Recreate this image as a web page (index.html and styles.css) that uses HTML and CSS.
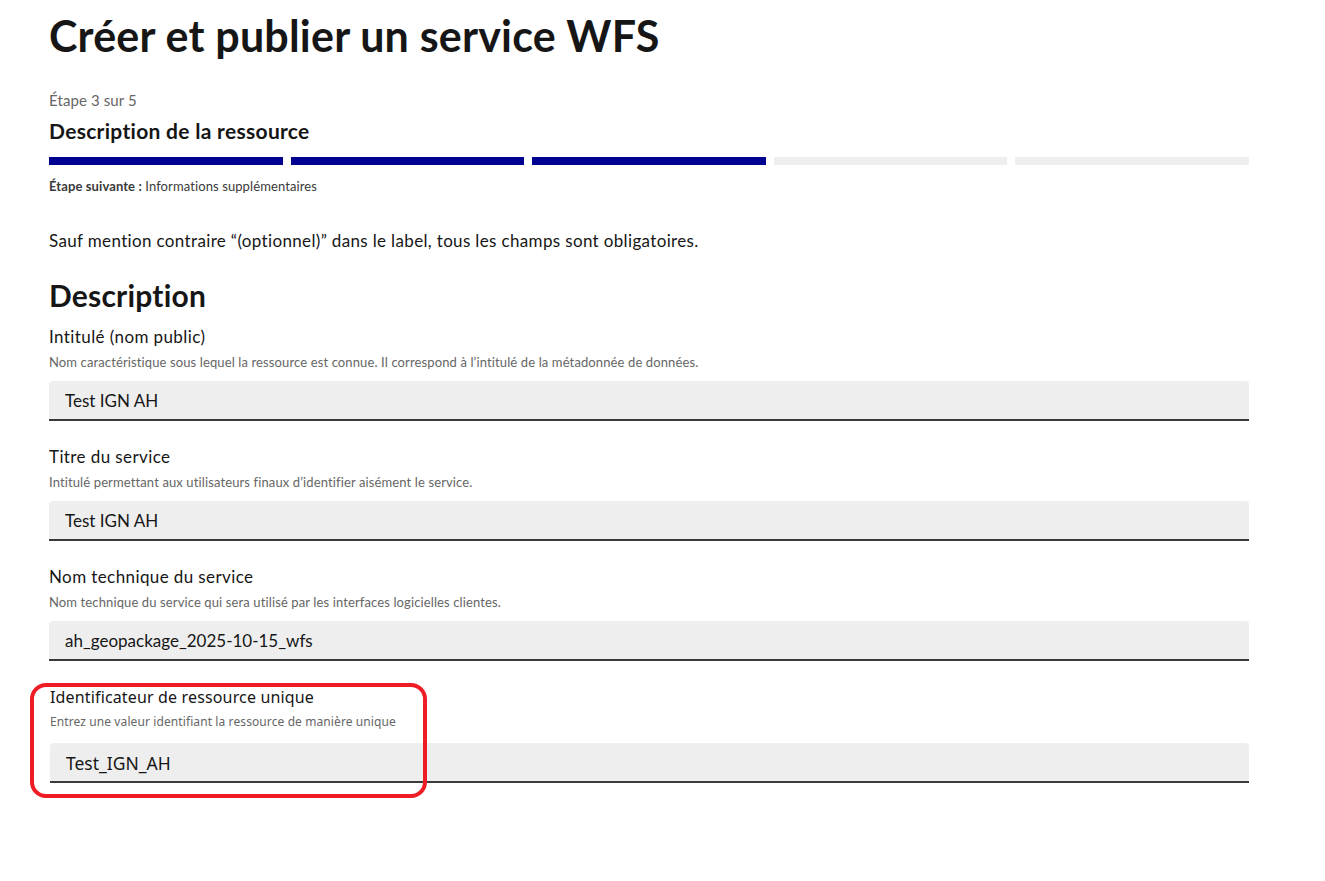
FILE: index.html
```
<!DOCTYPE html>
<html lang="fr">
<head>
<meta charset="utf-8">
<title>Créer et publier un service WFS</title>
<link rel="stylesheet" href="styles.css">
</head>
<body>
<main class="page">
  <h1 class="title">Créer et publier un service WFS</h1>
  <div class="stepper">
    <p class="stepper-state">Étape 3 sur 5</p>
    <h2 class="stepper-title">Description de la ressource</h2>
    <div class="stepper-steps">
      <span class="step done"></span>
      <span class="step done"></span>
      <span class="step done"></span>
      <span class="step"></span>
      <span class="step"></span>
    </div>
    <p class="stepper-next"><b>Étape suivante :</b> Informations supplémentaires</p>
  </div>
  <p class="intro">Sauf mention contraire “(optionnel)” dans le label, tous les champs sont obligatoires.</p>
  <h2 class="section">Description</h2>
  <div class="group">
    <label class="label">Intitulé (nom public)</label>
    <p class="hint">Nom caractéristique sous lequel la ressource est connue. Il correspond à l’intitulé de la métadonnée de données.</p>
    <div class="input">Test IGN AH</div>
  </div>
  <div class="group">
    <label class="label">Titre du service</label>
    <p class="hint">Intitulé permettant aux utilisateurs finaux d’identifier aisément le service.</p>
    <div class="input">Test IGN AH</div>
  </div>
  <div class="group">
    <label class="label">Nom technique du service</label>
    <p class="hint">Nom technique du service qui sera utilisé par les interfaces logicielles clientes.</p>
    <div class="input">ah_geopackage_2025-10-15_wfs</div>
  </div>
  <div class="group group-alt">
    <label class="label">Identificateur de ressource unique</label>
    <p class="hint">Entrez une valeur identifiant la ressource de manière unique</p>
    <div class="input">Test_IGN_AH</div>
    <span class="highlight"></span>
  </div>
</main>
</body>
</html>
```
FILE: styles.css
```
* { box-sizing: border-box; }
html, body { margin: 0; padding: 0; background: #fff; }
body {
  font-family: Lato, "Liberation Sans", sans-serif;
  color: #161616;
}
.page {
  width: 1200px;
  margin-left: 49px;
  padding-top: 12px;
  padding-bottom: 80px;
}
.title {
  margin: 0;
  font-size: 43px;
  line-height: 48px;
  font-weight: 700;
  letter-spacing: 0.2px;
}
.stepper { margin-top: 28px; }
.stepper-state {
  margin: 0;
  font-size: 15px;
  line-height: 24px;
  letter-spacing: 0.1px;
  color: #666;
}
.stepper-title {
  margin: 5px 0 0;
  font-size: 21px;
  line-height: 28px;
  font-weight: 700;
  letter-spacing: 0.3px;
}
.stepper-steps {
  display: flex;
  gap: 8px;
  margin-top: 12px;
  height: 8px;
}
.step { flex: 1; background: #eee; }
.step.done { background: #000091; }
.stepper-next {
  margin: 11px 0 0;
  font-size: 13px;
  line-height: 20px;
  letter-spacing: 0.1px;
  color: #3a3a3a;
}
.stepper-next b { font-weight: 700; }
.intro {
  margin: 33px 0 0;
  font-size: 17px;
  line-height: 24px;
  letter-spacing: 0.35px;
}
.section {
  margin: 24px 0 0;
  font-size: 30px;
  line-height: 36px;
  font-weight: 700;
  letter-spacing: 0.2px;
}
.group { margin-top: 12px; }
.group + .group { margin-top: 24px; }
.label {
  display: block;
  font-size: 17px;
  line-height: 24px;
  letter-spacing: 0.4px;
}
.hint {
  margin: 3px 0 0;
  font-size: 13px;
  line-height: 20px;
  letter-spacing: 0.12px;
  color: #666;
}
.input {
  margin-top: 9px;
  height: 40px;
  padding: 0 16px;
  background: #eee;
  border-radius: 4px 4px 0 0;
  box-shadow: inset 0 -2px 0 0 #3a3a3a;
  font-size: 17px;
  line-height: 40px;
  color: #161616;
}
.group-alt {
  position: relative;
  margin-left: 1px;
  font-family: "Noto Sans", "Open Sans", sans-serif;
}
.group-alt .label { font-size: 16px; letter-spacing: 0.15px; }
.group-alt .hint { font-size: 12px; letter-spacing: 0.1px; }
.group-alt .input { margin-top: 11px; font-size: 17.5px; }
.highlight {
  position: absolute;
  left: -20px;
  top: -2px;
  width: 397px;
  height: 115px;
  border: 4px solid #ee1d25;
  border-radius: 16px;
  pointer-events: none;
}
```
